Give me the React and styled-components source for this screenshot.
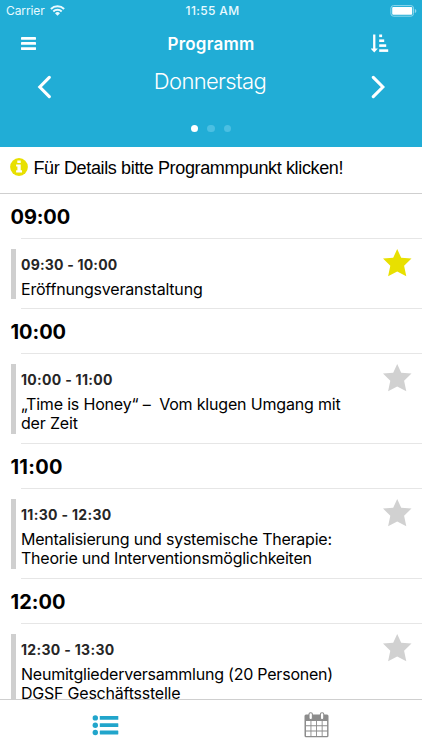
import React from "react";
import styled, { createGlobalStyle } from "styled-components";

const GlobalStyle = createGlobalStyle`
  * { box-sizing: border-box; }
  body { margin: 0; background: #fff; }
`;

const Screen = styled.div`
  width: 422px;
  height: 750px;
  display: flex;
  flex-direction: column;
  overflow: hidden;
  background: #fff;
  color: #000;
  font-family: Inter, "Noto Sans", sans-serif;
`;

const Header = styled.header`
  flex: none;
  height: 147px;
  display: flex;
  flex-direction: column;
  background: #21add6;
  color: #fff;
`;

const StatusBar = styled.div`
  height: 22px;
  display: grid;
  grid-template-columns: 1fr auto 1fr;
  align-items: center;
  padding: 0 5px 0 6px;
  color: #e9faff;
`;

const Carrier = styled.div`
  display: flex;
  align-items: center;
  gap: 5px;
  font-size: 12px;
  line-height: 22px;
  letter-spacing: -0.1px;

  svg {
    margin-bottom: 1px;
  }
`;

const Clock = styled.div`
  padding-left: 2px;
  font-size: 12px;
  font-weight: 500;
  line-height: 22px;
  letter-spacing: 0.35px;
`;

const BatterySlot = styled.div`
  display: flex;
  justify-content: flex-end;
  margin-top: -1px;
`;

const TitleBar = styled.div`
  height: 44px;
  display: grid;
  grid-template-columns: 60px 1fr 60px;
  align-items: center;
`;

const IconButton = styled.button`
  display: flex;
  align-items: center;
  margin: 0;
  padding: ${(p) => p.$pad || "0"};
  border: 0;
  background: none;
  color: inherit;
`;

const Title = styled.h1`
  margin: 0;
  text-align: center;
  font-size: 17px;
  font-weight: 600;
  line-height: 22px;
  letter-spacing: 0.2px;
`;

const DayBar = styled.div`
  height: 42px;
  display: grid;
  grid-template-columns: 60px 1fr 60px;
`;

const Day = styled.div`
  padding-right: 2px;
  text-align: center;
  font-size: 22px;
  font-weight: 350;
  line-height: 30px;
  letter-spacing: -0.65px;
`;

const Dots = styled.div`
  display: flex;
  justify-content: center;
  gap: 9px;
  padding-top: 16.5px;
`;

const Dot = styled.span`
  width: 7.4px;
  height: 7.4px;
  border-radius: 50%;
  background: ${(p) => (p.$active ? "#fff" : "#4bbfe2")};
`;

const Notice = styled.div`
  flex: none;
  height: 46px;
  display: flex;
  align-items: flex-start;
  gap: 5px;
  padding: 11px 0 0 10.4px;
`;

const NoticeText = styled.span`
  font-family: "Liberation Sans", Arial, sans-serif;
  font-size: 18px;
  line-height: 20px;
  letter-spacing: -0.36px;
  white-space: nowrap;
`;

const Schedule = styled.main`
  flex: 1;
  min-height: 0;
  overflow: hidden;
  border-top: 1px solid #cfcfcf;
`;

const Hour = styled.h2`
  height: ${(p) => p.$height}px;
  margin: 0;
  padding: ${(p) => p.$height - 43.5}px 0 0 10.5px;
  font-size: 20px;
  font-weight: 700;
  line-height: 45px;
  letter-spacing: ${(p) => p.$spacing}px;
`;

const Entry = styled.article`
  height: ${(p) => p.$height}px;
  display: flex;
  padding: 11px 0 9px 10.5px;
  background: linear-gradient(#e6e6e6, #e6e6e6) 21px 0 / 100% 1px no-repeat;

  & + h2 {
    background: linear-gradient(#e6e6e6, #e6e6e6) 21px 0 / 100% 1px no-repeat;
  }
`;

const Marker = styled.div`
  flex: none;
  width: 5px;
  background: #cfcfcf;
`;

const EntryBody = styled.div`
  flex: 1;
  padding-left: 5.5px;
`;

const Time = styled.div`
  padding-top: 6px;
  color: #262626;
  font-size: 14px;
  font-weight: 700;
  line-height: 19px;
  letter-spacing: ${(p) => p.$spacing}px;
`;

const EntryTitle = styled.div`
  margin-top: 6px;
  font-size: 16px;
  line-height: 19px;
  letter-spacing: ${(p) => p.$spacing}px;
  white-space: pre;
`;

const StarSlot = styled.div`
  flex: none;
  width: 39.5px;
  color: ${(p) => (p.$active ? "#e8e000" : "#d1d1d1")};
`;

const TabBar = styled.nav`
  flex: none;
  height: 51px;
  display: grid;
  grid-template-columns: 1fr 1fr;
  border-top: 1px solid #cfcfcf;
  background: #fff;
`;

const Tab = styled.button`
  display: flex;
  justify-content: center;
  align-items: flex-start;
  margin: 0;
  padding: ${(p) => p.$top}px 0 0;
  border: 0;
  background: none;
  color: ${(p) => (p.$active ? "#21a5cb" : "#8c8c8c")};
`;

const Wifi = () => (
  <svg width="15" height="11" viewBox="0 0 15 11" fill="none" stroke="currentColor">
    <path d="M.9 4a9.300 9.300 0 0 1 13.200 0" strokeWidth="2" />
    <path d="M3.300 6.500a5.900 5.900 0 0 1 8.400 0" strokeWidth="1.900" />
    <path d="M7.500 10.700 5 8.200a3.500 3.500 0 0 1 5 0z" fill="currentColor" stroke="none" />
  </svg>
);

const Battery = () => (
  <svg width="27" height="12" viewBox="0 0 27 12">
    <rect x="0.9" y="0.6" width="22.6" height="10.6" rx="2.6" fill="none" stroke="#8fd8ee" />
    <rect x="2.2" y="2" width="20" height="7.8" rx="1" fill="#fff" />
    <path d="M24.8 4v4c1-.4 1.5-1.1 1.5-2s-.5-1.6-1.5-2z" fill="#8fd8ee" />
  </svg>
);

const MenuIcon = () => (
  <svg width="15" height="13" viewBox="0 0 15 13" fill="currentColor">
    <rect y="0" width="15" height="2.7" rx="0.4" />
    <rect y="5.1" width="15" height="2.7" rx="0.4" />
    <rect y="10.2" width="15" height="2.7" rx="0.4" />
  </svg>
);

const SortIcon = () => (
  <svg width="18" height="19" viewBox="0 0 18 19" fill="currentColor">
    <path d="M2.100.5h2.300v14h2.500L3.250 18.500-.4 14.500h2.500z" />
    <rect x="8.200" y="0.500" width="2.900" height="2.600" />
    <rect x="8.200" y="5.400" width="5" height="2.600" />
    <rect x="8.200" y="10.300" width="7" height="2.600" />
    <rect x="8.200" y="15.300" width="9" height="2.600" />
  </svg>
);

const Chevron = ({ d }) => (
  <svg width="14" height="24" viewBox="0 0 14 24" fill="none" stroke="currentColor" strokeWidth="3.1">
    <path d={d} strokeLinecap="round" strokeLinejoin="miter" />
  </svg>
);

const InfoIcon = () => (
  <svg width="18" height="18" viewBox="0 0 18 18">
    <circle cx="9" cy="9" r="8.9" fill="#e8e000" />
    <path d="M7.3 2.6h3.400v2.500H7.300zM6.100 6.400h4.600v5.800h1.300v2.300H6.100v-2.300h1.300V8.600H6.100z" fill="#fff" />
  </svg>
);

const Star = () => (
  <svg width="29" height="28" viewBox="0 0 29 28" fill="currentColor">
    <path d="M14.2 0 18.200 8.800 28.500 9.500 21.100 16.700 23.300 27.300 14.200 22.400 5.100 27.300 7.300 16.700 0 9.500 10.200 8.800z" />
  </svg>
);

const ListIcon = () => (
  <svg width="27" height="21" viewBox="0 0 27 21" fill="currentColor">
    {[2.9, 10.2, 17.5].map((y) => (
      <g key={y}>
        <circle cx="3.3" cy={y} r="2.7" />
        <rect x="7.8" y={y - 1.9} width="18.5" height="3.8" rx="0.4" />
      </g>
    ))}
  </svg>
);

const CalendarIcon = () => (
  <svg width="25" height="26" viewBox="0 0 25 26">
    <path
      fill="currentColor"
      fillRule="evenodd"
      d="M2 2.500h21q1.500 0 1.500 1.500v19.800q0 1.500-1.500 1.500H2Q.5 25.300.5 23.800V4q0-1.500 1.500-1.500zM2 9v4.300h4.500V9zm5.400 0v4.300h4.700V9zM13 9v4.300h4.700V9zm5.600 0v4.300h4.500V9zM2 14.200v4.300h4.500v-4.300zm5.400 0v4.300h4.700v-4.300zm5.600 0v4.300h4.700v-4.300zm5.600 0v4.300h4.500v-4.300zM2 19.400v4.500h4.500v-4.500zm5.400 0v4.500h4.700v-4.500zm5.600 0v4.500h4.700v-4.500zm5.600 0v4.500h4.500v-4.500z"
    />
    <rect x="5" y="0.7" width="3.4" height="6.8" rx="1.5" fill="#fff" stroke="currentColor" strokeWidth="1.1" />
    <rect x="16.4" y="0.7" width="3.4" height="6.8" rx="1.5" fill="#fff" stroke="currentColor" strokeWidth="1.1" />
  </svg>
);

const SLOTS = [
  { hour: "09:00", spacing: 0, time: "09:30 - 10:00", timeSpacing: 0.2, title: "Eröffnungsveranstaltung", titleSpacing: -0.2, height: 70, starred: true },
  { hour: "10:00", spacing: 0.05, time: "10:00 - 11:00", timeSpacing: 0.3, title: "„Time is Honey“ –  Vom klugen Umgang mit\nder Zeit", titleSpacing: -0.18, height: 90 },
  { hour: "11:00", spacing: 0.35, time: "11:30 - 12:30", timeSpacing: 0.32, title: "Mentalisierung und systemische Therapie:\nTheorie und Interventionsmöglichkeiten", titleSpacing: -0.235, height: 90 },
  { hour: "12:00", spacing: 0.15, time: "12:30 - 13:30", timeSpacing: 0.32, title: "Neumitgliederversammlung (20 Personen)\nDGSF Geschäftsstelle", titleSpacing: -0.225, height: 90 },
];

export default function App() {
  return (
    <Screen>
      <GlobalStyle />
      <Header>
        <StatusBar>
          <Carrier>Carrier <Wifi /></Carrier>
          <Clock>11:55 AM</Clock>
          <BatterySlot><Battery /></BatterySlot>
        </StatusBar>
        <TitleBar>
          <IconButton $pad="0 0 2px 21px" aria-label="Menü"><MenuIcon /></IconButton>
          <Title>Programm</Title>
          <IconButton $pad="0 0 2px 9px" aria-label="Sortieren"><SortIcon /></IconButton>
        </TitleBar>
        <DayBar>
          <IconButton $pad="0 0 0 37px" aria-label="Zurück"><Chevron d="M12.300 2.300 2.800 12 12.300 21.700" /></IconButton>
          <Day>Donnerstag</Day>
          <IconButton $pad="0 0 0 8.500px" aria-label="Weiter"><Chevron d="M2.300 2.300 11.900 12 2.300 21.700" /></IconButton>
        </DayBar>
        <Dots><Dot $active /><Dot /><Dot /></Dots>
      </Header>
      <Notice>
        <InfoIcon />
        <NoticeText>Für Details bitte Programmpunkt klicken!</NoticeText>
      </Notice>
      <Schedule>
        {SLOTS.map((s, i) => (
          <React.Fragment key={s.hour}>
            <Hour $spacing={s.spacing - 0.1} $height={i === 0 ? 44 : 45}>{s.hour}</Hour>
            <Entry $height={s.height}>
              <Marker />
              <EntryBody>
                <Time $spacing={s.timeSpacing}>{s.time}</Time>
                <EntryTitle $spacing={s.titleSpacing}>{s.title}</EntryTitle>
              </EntryBody>
              <StarSlot $active={s.starred}><Star /></StarSlot>
            </Entry>
          </React.Fragment>
        ))}
      </Schedule>
      <TabBar>
        <Tab $active $top={15} aria-label="Liste"><ListIcon /></Tab>
        <Tab $top={12} aria-label="Kalender"><CalendarIcon /></Tab>
      </TabBar>
    </Screen>
  );
}
